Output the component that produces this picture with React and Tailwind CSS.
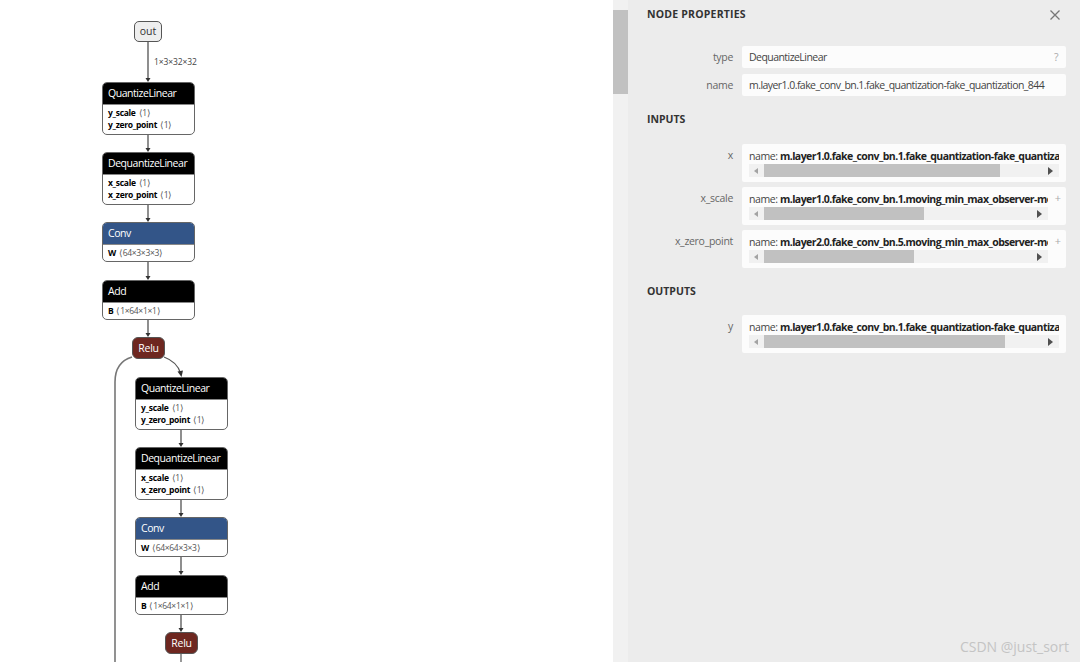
const font = { fontFamily: '"Open Sans", "Noto Sans", sans-serif' };

function Attr({ name, shape }) {
  return (
    <div className="h-[12px] leading-[12px] whitespace-nowrap text-[8.5px] tracking-[-0.3px] text-[#555]">
      <span className="font-bold text-black">{name}</span>
      <span className="ml-[3px]">⟨{shape}⟩</span>
    </div>
  );
}

function OpNode({ x, y, title, color, attrs, h }) {
  return (
    <div
      className={`absolute ${x} ${y} w-[92.5px] ${h} rounded-[5px] border border-[#666] bg-white overflow-hidden`}
    >
      <div className={`h-[21px] ${color} text-white text-[10.5px] tracking-[-0.45px] leading-[21px] pl-[5px] whitespace-nowrap`}>{title}</div>
      <div className="border-t border-[#888] pl-[5px] pt-[2px]">
        {attrs.map((a) => (
          <Attr key={a[0]} name={a[0]} shape={a[1]} />
        ))}
      </div>
    </div>
  );
}

function Relu({ x, y }) {
  return (
    <div className={`absolute ${x} ${y} w-[33px] h-[22px] rounded-[6px] border border-[#555] bg-[#6e2720] text-white text-[10.5px] tracking-[-0.3px] leading-[20px] text-center`}>
      Relu
    </div>
  );
}

function Graph() {
  const down = [
    [148, 42, 82], [148, 134, 152], [148, 204, 222], [148, 262, 280], [148, 320, 337],
    [181, 429, 447], [181, 499, 517], [181, 557, 575], [181, 614, 632],
  ];
  return (
    <div className="relative w-[613px] h-full bg-white overflow-hidden">
      <svg className="absolute left-0 top-0" width="613" height="662" fill="none">
        <path d="M115 662V382C115 368 122 360 132 357" stroke="#777" strokeWidth="1.6" />
        <path d="M164 357C172 360 178 365 180.500 373" stroke="#555" strokeWidth="1.1" />
        <path d="M177.500 371.500L183 370.500L181.500 377Z" fill="#333" />
        <path d="M181 654V662" stroke="#444" strokeWidth="1.1" />
        {down.map(([x, a, b]) => (
          <g key={a}>
            <path d={`M${x} ${a}V${b - 3}`} stroke="#444" strokeWidth="1.2" />
            <path d={`M${x - 2.500} ${b - 4}H${x + 2.500}L${x} ${b}Z`} fill="#333" />
          </g>
        ))}
      </svg>
      <div className="absolute left-[134px] top-[21px] w-[28px] h-[21px] rounded-[5px] border border-[#555] bg-[#eeeeee] text-[10.5px] leading-[19px] text-center text-[#333]">
        out
      </div>
      <div className="absolute left-[154px] top-[56px] text-[8.5px] tracking-[-0.1px] leading-[12px] text-[#444] whitespace-nowrap">1×3×32×32</div>
      <OpNode x="left-[102px]" y="top-[82px]" h="h-[53px]" title="QuantizeLinear" color="bg-black" attrs={[['y_scale', '1'], ['y_zero_point', '1']]} />
      <OpNode x="left-[102px]" y="top-[152px]" h="h-[53px]" title="DequantizeLinear" color="bg-black" attrs={[['x_scale', '1'], ['x_zero_point', '1']]} />
      <OpNode x="left-[102px]" y="top-[222px]" h="h-[40px]" title="Conv" color="bg-[#335588]" attrs={[['W', '64×3×3×3']]} />
      <OpNode x="left-[102px]" y="top-[280px]" h="h-[40px]" title="Add" color="bg-black" attrs={[['B', '1×64×1×1']]} />
      <Relu x="left-[132px]" y="top-[337px]" />
      <OpNode x="left-[135px]" y="top-[377px]" h="h-[53px]" title="QuantizeLinear" color="bg-black" attrs={[['y_scale', '1'], ['y_zero_point', '1']]} />
      <OpNode x="left-[135px]" y="top-[447px]" h="h-[53px]" title="DequantizeLinear" color="bg-black" attrs={[['x_scale', '1'], ['x_zero_point', '1']]} />
      <OpNode x="left-[135px]" y="top-[517px]" h="h-[40px]" title="Conv" color="bg-[#335588]" attrs={[['W', '64×64×3×3']]} />
      <OpNode x="left-[135px]" y="top-[575px]" h="h-[40px]" title="Add" color="bg-black" attrs={[['B', '1×64×1×1']]} />
      <Relu x="left-[165px]" y="top-[632px]" />
    </div>
  );
}

function Label({ children, className = '' }) {
  return <div className={`w-[86px] shrink-0 text-right text-[10.5px] tracking-[-0.3px] text-[#666] ${className}`}>{children}</div>;
}

function PlainRow({ label, value, hint }) {
  return (
    <div className="flex gap-[9px] h-[22px]">
      <Label className="leading-[22px]">{label}</Label>
      <div className="w-[324px] rounded-[2px] bg-[#fcfcfc] pl-[7px] pr-[8px] flex justify-between text-[10.5px] tracking-[-0.55px] leading-[22px] text-[#444] whitespace-nowrap">
        <span>{value}</span>
        {hint && <span className="text-[#aaa]">{hint}</span>}
      </div>
    </div>
  );
}

function ValueRow({ label, value, thumb, expand }) {
  return (
    <div className="flex gap-[9px] h-[38px]">
      <Label className="pt-[4px] leading-[15px]">{label}</Label>
      <div className="relative w-[324px] rounded-[2px] bg-[#fcfcfc] pl-[7px] pt-[6px]">
        <div className={`${expand ? 'w-[299px]' : 'w-[310px]'} overflow-hidden`}>
          <div className="text-[10.5px] tracking-[-0.4px] leading-[13px] text-[#444] whitespace-nowrap">
            name: <span className="font-bold tracking-[-0.55px] text-[#222]">{value}</span>
          </div>
          <div className="mt-[1px] h-[13px] bg-[#f1f1f1] flex items-center justify-between pl-[5px] pr-[6px]">
            <div className="w-0 h-0 border-y-[3.5px] border-y-transparent border-r-[4px] border-r-[#a3a3a3]" />
            <div className="w-0 h-0 border-y-4 border-y-transparent border-l-[5px] border-l-[#505050]" />
          </div>
        </div>
        <div className={`absolute left-[22px] top-[20px] h-[13px] ${thumb} bg-[#c1c1c1]`} />
        {expand && <div className="absolute right-[5px] top-[4px] text-[11px] leading-[13px] text-[#aaa]">+</div>}
      </div>
    </div>
  );
}

function Panel() {
  return (
    <div className="relative flex-1 h-full bg-[#ececec] pl-[19px] pt-[7px]">
      <div className="flex items-center justify-between h-[16px] pr-[19px]">
        <div className="text-[10.5px] font-bold tracking-[0.2px] text-[#333]">NODE PROPERTIES</div>
        <svg width="12" height="12" viewBox="0 0 12 12" fill="none" stroke="#777" strokeWidth="1.3">
          <path d="M1.500 1.500L10.500 10.500M10.500 1.500L1.500 10.500" />
        </svg>
      </div>
      <div className="mt-[23px] flex flex-col gap-[6px]">
        <PlainRow label="type" value="DequantizeLinear" hint="?" />
        <PlainRow label="name" value="m.layer1.0.fake_conv_bn.1.fake_quantization-fake_quantization_844" />
      </div>
      <div className="mt-[16px] h-[15px] text-[10.5px] leading-[15px] font-bold text-[#333]">INPUTS</div>
      <div className="mt-[17px] flex flex-col gap-[5px]">
        <ValueRow label="x" thumb="w-[236px]" value="m.layer1.0.fake_conv_bn.1.fake_quantization-fake_quantization_844" />
        <ValueRow label="x_scale" thumb="w-[160px]" expand value="m.layer1.0.fake_conv_bn.1.moving_min_max_observer-moving_min_max" />
        <ValueRow label="x_zero_point" thumb="w-[150px]" expand value="m.layer2.0.fake_conv_bn.5.moving_min_max_observer-moving_min_max" />
      </div>
      <div className="mt-[16px] h-[15px] text-[10.5px] leading-[15px] font-bold text-[#333]">OUTPUTS</div>
      <div className="mt-[16px]">
        <ValueRow label="y" thumb="w-[241px]" value="m.layer1.0.fake_conv_bn.1.fake_quantization-fake_quantization_844" />
      </div>
      <div className="absolute right-[11px] bottom-[6px] text-[14px] leading-[18px] text-[#c4c4c4]">CSDN @just_sort</div>
    </div>
  );
}

export default function App() {
  return (
    <div className="flex w-[1080px] h-[662px] overflow-hidden" style={font}>
      <Graph />
      <div className="w-[15px] h-full bg-[#f1f1f1] pt-[10px] shrink-0">
        <div className="h-[84px] bg-[#c1c1c1]" />
      </div>
      <Panel />
    </div>
  );
}
